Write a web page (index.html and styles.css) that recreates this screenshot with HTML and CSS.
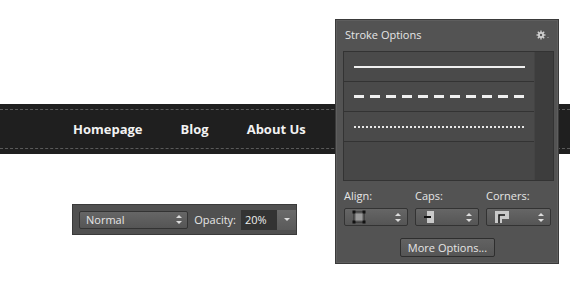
FILE: index.html
```html
<!DOCTYPE html>
<html lang="en">
<head>
    <meta charset="UTF-8">
    <title>Stroke Options</title>
    <link rel="stylesheet" href="styles.css">
</head>
<body>
    <nav class="navbar">
        <div class="nav-links">
            <a href="#">Homepage</a>
            <a href="#">Blog</a>
            <a href="#">About Us</a>
        </div>
    </nav>

    <div class="toolbar">
        <div class="select blend">
            <span>Normal</span>
            <span class="spin"></span>
        </div>
        <span class="toolbar-label">Opacity:</span>
        <div class="opacity">
            <span class="opacity-value">20%</span>
            <span class="opacity-btn"><span class="caret"></span></span>
        </div>
    </div>

    <div class="panel">
        <div class="panel-title">
            <span>Stroke Options</span>
            <svg class="gear" width="14" height="10" viewBox="0 0 14 10">
                <g fill="#cfcfcf">
                    <circle cx="5" cy="5" r="3"/>
                    <rect x="4.3" y="0.5" width="1.4" height="9"/>
                    <rect x="0.5" y="4.3" width="9" height="1.4"/>
                    <rect x="4.3" y="0.5" width="1.4" height="9" transform="rotate(45 5 5)"/>
                    <rect x="4.3" y="0.5" width="1.4" height="9" transform="rotate(-45 5 5)"/>
                </g>
                <circle cx="5" cy="5" r="1.2" fill="#535353"/>
                <rect x="11.5" y="7" width="1" height="1" fill="#aaa"/>
            </svg>
        </div>

        <div class="stroke-list">
            <div class="stroke-rows">
                <div class="stroke-row"><div class="stroke solid"></div></div>
                <div class="stroke-row"><div class="stroke dashed"></div></div>
                <div class="stroke-row"><div class="stroke dotted"></div></div>
            </div>
            <div class="scroll-track"></div>
        </div>

        <div class="options">
            <div class="option">
                <label>Align:</label>
                <div class="select small">
                    <svg class="opt-icon" width="14" height="14" viewBox="0 0 14 14">
                        <rect x="2" y="2" width="10" height="10" fill="#7a7a7a" stroke="#2a2a2a" stroke-width="1"/>
                        <rect x="4" y="4" width="6" height="6" fill="#9a9a9a"/>
                        <rect x="0.5" y="0.5" width="3" height="3" fill="#111"/>
                        <rect x="10.5" y="0.5" width="3" height="3" fill="#111"/>
                        <rect x="0.5" y="10.5" width="3" height="3" fill="#111"/>
                        <rect x="10.5" y="10.5" width="3" height="3" fill="#111"/>
                    </svg>
                    <span class="spin"></span>
                </div>
            </div>
            <div class="option">
                <label>Caps:</label>
                <div class="select small">
                    <svg class="opt-icon" width="14" height="14" viewBox="0 0 14 14">
                        <rect x="4" y="1" width="7" height="12" fill="#c9c9c9"/>
                        <rect x="1" y="6" width="7" height="2" fill="#111"/>
                    </svg>
                    <span class="spin"></span>
                </div>
            </div>
            <div class="option">
                <label>Corners:</label>
                <div class="select small">
                    <svg class="opt-icon" width="16" height="14" viewBox="0 0 16 14">
                        <path d="M1 1h14v8H8v4H1z" fill="#c9c9c9"/>
                        <path d="M5 13V5h6" fill="none" stroke="#111" stroke-width="1.5"/>
                    </svg>
                    <span class="spin"></span>
                </div>
            </div>
        </div>

        <div class="panel-footer">
            <button type="button">More Options...</button>
        </div>
    </div>
</body>
</html>
```

FILE: styles.css
```css
:root {
    --bar-color: #1f1f1f;
    --panel-bg: #535353;
    --panel-border: #3a3a3a;
    --text-light: #e6e6e6;
}

body {
    margin: 0;
    width: 570px;
    height: 294px;
    position: relative;
    background: white;
    font-family: "Open Sans", "DejaVu Sans", sans-serif;
    overflow: hidden;
}

/* nav bar */
.navbar {
    margin-top: 104px;
    height: 50px;
    background-color: var(--bar-color);
    box-sizing: border-box;
    padding: 5px 0;
}

.nav-links {
    height: 38px;
    border-top: 1px dashed #5a5a5a;
    border-bottom: 1px dashed #5a5a5a;
    display: flex;
    align-items: center;
    padding-left: 73px;
    gap: 38px;
}

.nav-links a {
    color: #f2f2f2;
    text-decoration: none;
    font-weight: bold;
    font-size: 13px;
}

/* blend toolbar */
.toolbar {
    margin: 50px 0 0 72px;
    width: 225px;
    height: 31px;
    box-sizing: border-box;
    background: #505050;
    border: 1px solid #3a3a3a;
    display: flex;
    align-items: center;
    padding-left: 6px;
    font-size: 11px;
    color: var(--text-light);
}

.select {
    height: 18px;
    box-sizing: border-box;
    border: 1px solid #333;
    border-radius: 2px;
    background: linear-gradient(#666, #555);
    display: flex;
    align-items: center;
    justify-content: space-between;
    padding: 0 5px 0 6px;
    color: var(--text-light);
}

.blend {
    width: 110px;
}

.spin {
    width: 6px;
    height: 9px;
    position: relative;
    flex-shrink: 0;
}

.spin::before,
.spin::after {
    content: "";
    position: absolute;
    left: 0;
    border-left: 3px solid transparent;
    border-right: 3px solid transparent;
}

.spin::before {
    top: 0;
    border-bottom: 3px solid #ddd;
}

.spin::after {
    bottom: 0;
    border-top: 3px solid #ddd;
}

.toolbar-label {
    margin-left: 6px;
}

.opacity {
    margin-left: 5px;
    display: flex;
    height: 20px;
}

.opacity-value {
    width: 36px;
    background: #333;
    color: #eee;
    display: flex;
    align-items: center;
    padding-left: 4px;
    box-sizing: border-box;
}

.opacity-btn {
    width: 19px;
    background: linear-gradient(#6a6a6a, #5a5a5a);
    display: flex;
    align-items: center;
    justify-content: center;
}

.caret {
    border-left: 3px solid transparent;
    border-right: 3px solid transparent;
    border-top: 3px solid #ddd;
}

/* stroke options panel */
.panel {
    position: absolute;
    left: 335px;
    top: 19px;
    width: 224px;
    height: 245px;
    box-sizing: border-box;
    background: var(--panel-bg);
    border: 1px solid var(--panel-border);
    box-shadow: inset 0 0 0 1px #5e5e5e;
    padding: 0 5px 0 7px;
    color: var(--text-light);
    font-size: 11px;
}

.panel-title {
    height: 31px;
    display: flex;
    align-items: center;
    justify-content: space-between;
    padding: 0 0 2px 2px;
    box-sizing: border-box;
}

.gear {
    margin-right: 3px;
}

.stroke-list {
    display: flex;
    width: 211px;
    height: 130px;
    box-sizing: border-box;
    border: 1px solid #333;
    background: #474747;
}

.stroke-rows {
    flex: 1;
}

.stroke-row {
    height: 29px;
    border-bottom: 1px solid #333;
    background: #4a4a4a;
    display: flex;
    align-items: center;
    padding: 0 9px 0 10px;
}

.stroke {
    width: 100%;
}

.solid {
    border-top: 2px solid #f0f0f0;
}

.dashed {
    height: 3px;
    background: repeating-linear-gradient(90deg, #f0f0f0 0 10px, transparent 10px 16px);
}

.dotted {
    height: 2px;
    background: repeating-linear-gradient(90deg, #e8e8e8 0 2px, transparent 2px 4px);
}

.scroll-track {
    width: 18px;
    background: #3d3d3d;
    border-left: 1px solid #444;
}

.options {
    display: flex;
    gap: 7px;
    margin-top: 7px;
    padding-left: 1px;
}

.option label {
    display: block;
    height: 16px;
    margin-bottom: 4px;
    line-height: 16px;
}

.option .small {
    width: 64px;
    padding: 0 6px 0 7px;
}

.option:nth-child(3) .small {
    width: 65px;
}

.opt-icon {
    flex-shrink: 0;
    display: block;
}

.panel-footer {
    margin-top: 12px;
    padding-left: 57px;
}

button {
    width: 95px;
    height: 19px;
    box-sizing: border-box;
    border: 1px solid #2e2e2e;
    border-radius: 2px;
    background: linear-gradient(#626262, #555);
    color: var(--text-light);
    font-family: inherit;
    font-size: 11px;
    padding: 0;
}
```
